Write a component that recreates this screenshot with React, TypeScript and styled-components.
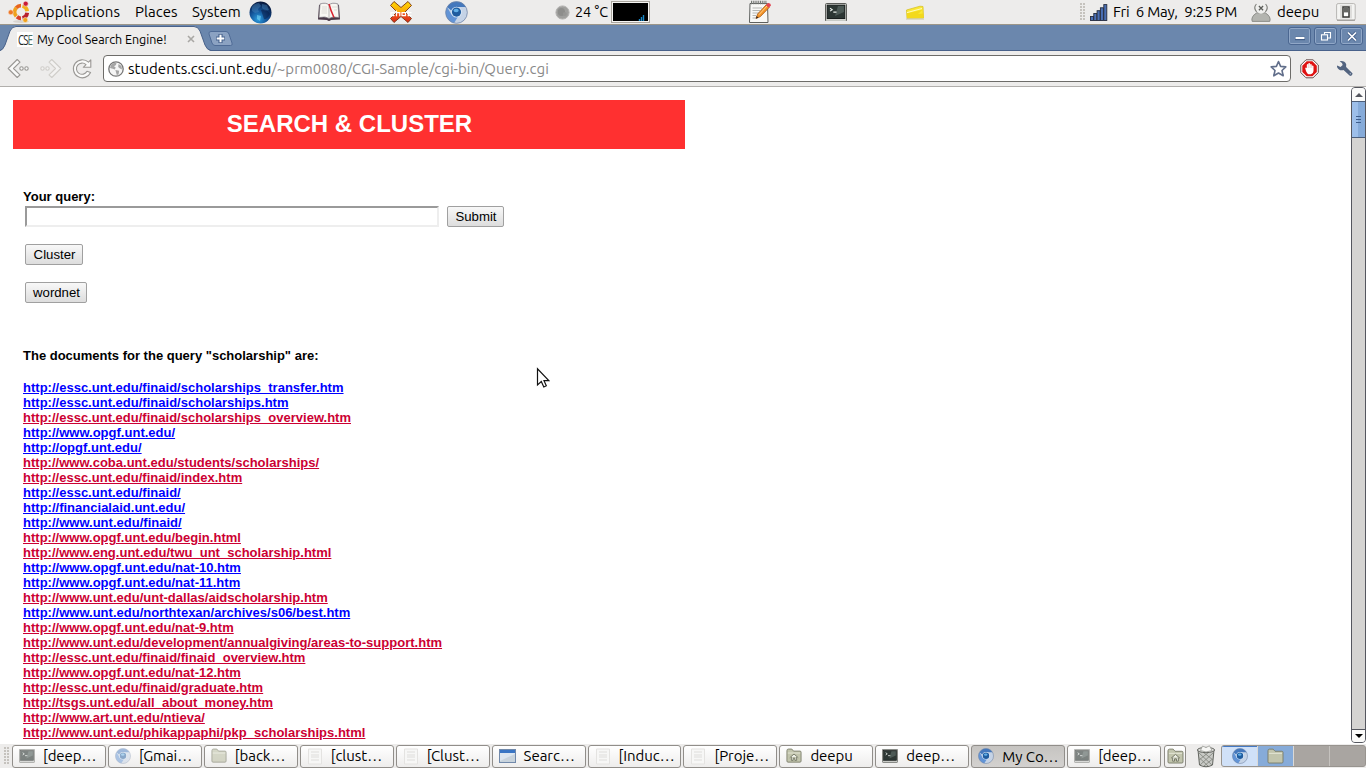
import React from "react";
import styled, { createGlobalStyle } from "styled-components";

const GlobalStyle = createGlobalStyle`
  * { box-sizing: border-box; }
  html, body { margin: 0; padding: 0; overflow: hidden; background: #fff; }
`;

const uiFont = `"Ubuntu", "Noto Sans", "Open Sans", sans-serif`;

const Desktop = styled.div`
  display: flex;
  flex-direction: column;
  width: 1366px;
  height: 768px;
  overflow: hidden;
  background: #fff;
  font-family: ${uiFont};
  color: #000;
`;

/* ---------- top panel ---------- */

const Panel = styled.header`
  display: flex;
  align-items: center;
  flex: none;
  height: 25px;
  background: #edeceb;
  border-bottom: 1px solid #9c9689;
`;

const PanelItem = styled.div<{ $w: number; $ml?: number }>`
  display: flex;
  align-items: center;
  flex: none;
  width: ${(p) => p.$w}px;
  height: 24px;
  margin-left: ${(p) => p.$ml ?? 0}px;
`;

const Label = styled.span<{ $ls?: number; $size?: number }>`
  font-size: ${(p) => p.$size ?? 15}px;
  line-height: 20px;
  letter-spacing: ${(p) => p.$ls ?? 0.05}px;
  white-space: pre;
`;

const Grip = styled.span<{ $h: number }>`
  flex: none;
  width: 5px;
  height: ${(p) => p.$h}px;
  background-image: radial-gradient(circle at 1px 1px, #c4c1bc 0.7px, transparent 0.9px);
  background-size: 3px 3px;
`;

const CpuGraph = styled.div`
  display: flex;
  align-items: flex-end;
  width: 39px;
  height: 22px;
  border: 1px solid #aaa69f;
  background: #000;
  box-shadow: inset 0 0 0 1px #f5f4f2;
  padding: 1px;
  svg { display: block; }
`;

/* ---------- browser chrome ---------- */

const TabStrip = styled.div`
  display: flex;
  flex: none;
  height: 26px;
  background: #6b87ad;
  border-bottom: 1px solid #48618a;
  position: relative;
`;

const Tab = styled.div`
  position: relative;
  flex: none;
  width: 211px;
  height: 26px;
`;

const TabShape = styled.svg`
  position: absolute;
  left: 0;
  top: 0;
`;

const TabContent = styled.div`
  position: relative;
  display: flex;
  align-items: center;
  height: 26px;
  padding-left: 17px;
`;

const Favicon = styled.span`
  display: flex;
  align-items: center;
  justify-content: center;
  width: 16px;
  height: 15px;
  margin-top: 2px;
  background: #fff;
  font: 14px/15px "Open Sans", sans-serif;
  letter-spacing: -1.4px;
  color: #1d2626;
  span { transform: scaleX(0.7); white-space: nowrap; }
  b { font-weight: 400; color: #4c7268; }
`;

const TabTitle = styled.span`
  width: 129px;
  margin-left: 4px;
  margin-top: 1px;
  font-size: 12.5px;
  letter-spacing: -0.04px;
  white-space: nowrap;
`;

const TabClose = styled.svg`
  margin-left: 21px;
  margin-top: 2px;
`;

const NewTab = styled.svg`
  flex: none;
  margin-left: -4px;
  margin-top: 5px;
`;

const WindowButtons = styled.div`
  display: flex;
  gap: 3px;
  margin-left: auto;
  margin-right: 3px;
  padding-top: 2px;
`;

const WindowButton = styled.button`
  display: flex;
  align-items: center;
  justify-content: center;
  width: 23px;
  height: 18px;
  padding: 0;
  border: 1px solid #4b6791;
  border-radius: 3px;
  background: #6b87ad;
  box-shadow: inset 0 0 0 1px #90a7c7;
`;

const Toolbar = styled.div`
  display: flex;
  align-items: center;
  flex: none;
  height: 36px;
  padding-left: 7px;
  background: #edeceb;
  border-bottom: 1px solid #b1afac;
`;

const ToolIcon = styled.svg<{ $ml?: number }>`
  flex: none;
  margin-left: ${(p) => p.$ml ?? 0}px;
`;

const AddressBar = styled.div`
  display: flex;
  align-items: center;
  flex: none;
  width: 1188px;
  height: 27px;
  margin-left: 10px;
  padding: 0 3px 0 4px;
  background: #fff;
  border: 1px solid #6d6c69;
  border-radius: 4px;
`;

const Url = styled.span`
  flex: 1;
  margin-left: 4px;
  margin-top: 0;
  font-size: 15px;
  letter-spacing: 0.02px;
  white-space: nowrap;
  color: #8a8a8a;
  b { font-weight: 400; color: #000; }
`;

/* ---------- page ---------- */

const Viewport = styled.div`
  display: flex;
  flex: none;
  height: 657px;
  overflow: hidden;
`;

const Page = styled.main`
  flex: 1;
  padding: 13px 0 0 13px;
  overflow: hidden;
  font-family: "Liberation Sans", Arial, sans-serif;
  font-size: 13px;
  line-height: 15px;
`;

const Banner = styled.h1`
  width: 672px;
  height: 49px;
  margin: 0;
  padding-left: 1px;
  background: #ff3030;
  color: #fff;
  font-size: 24px;
  line-height: 48px;
  font-weight: 700;
  text-align: center;
`;

const Body = styled.div`
  padding: 40px 0 0 10px;
`;

const Strong = styled.div`
  font-weight: 700;
`;

const QueryForm = styled.div`
  display: flex;
  flex-direction: column;
  align-items: flex-start;
  gap: 17px;
  padding: 2px 0 45px 2px;
`;

const QueryRow = styled.div`
  display: flex;
  gap: 8px;
`;

const QueryInput = styled.input`
  width: 414px;
  height: 21px;
  padding: 1px;
  border: 2px solid;
  border-color: #9a9a9a #eeeeee #eeeeee #9a9a9a;
  background: #fff;
  outline: none;
`;

const FormButton = styled.button<{ $w: number }>`
  width: ${(p) => p.$w}px;
  height: 21px;
  padding: 0 0 0 1px;
  border: 1px solid #a0a0a0;
  border-radius: 2px;
  background: linear-gradient(#f8f8f8, #dddddd);
  font: 13.2px/17px "Liberation Sans", Arial, sans-serif;
  color: #000;
  white-space: nowrap;
`;

const Results = styled.div`
  display: flex;
  flex-direction: column;
  align-items: flex-start;
  margin-top: 17px;
`;

const ResultLink = styled.a<{ $visited?: boolean }>`
  font-weight: 700;
  letter-spacing: 0.01px;
  text-decoration: underline;
  color: ${(p) => (p.$visited ? "#cc0033" : "#0000ff")};
`;

const ScrollBar = styled.div`
  display: flex;
  flex-direction: column;
  flex: none;
  width: 15px;
  height: 656px;
  background: #d5d4d2;
  border: 1px solid #55575f;
  border-radius: 4px;
`;

const ScrollArrow = styled.div<{ $down?: boolean }>`
  display: flex;
  align-items: center;
  justify-content: center;
  height: 13px;
  background: #fbfbfa;
  border-radius: ${(p) => (p.$down ? "0 0 3px 3px" : "3px 3px 0 0")};
  margin-top: ${(p) => (p.$down ? "auto" : "0")};
  border-top: ${(p) => (p.$down ? "1px solid #55575f" : "none")};
`;

const ScrollThumb = styled.div`
  display: flex;
  align-items: center;
  justify-content: center;
  height: 37px;
  border: solid #4c5f7b;
  border-width: 1px 0;
  background: linear-gradient(90deg, #9dbfea 0 50%, #86abd9 50%);
`;

/* ---------- bottom panel ---------- */

const TaskBar = styled.footer`
  display: flex;
  align-items: center;
  flex: none;
  height: 24px;
  padding-left: 4px;
  background: #edeceb;
`;

const TaskList = styled.div`
  display: flex;
  gap: 2px;
  width: 1149px;
  margin-left: 3px;
`;

const Task = styled.button<{ $active?: boolean }>`
  display: flex;
  align-items: center;
  flex: 1;
  min-width: 0;
  height: 23px;
  padding: 0 0 0 6px;
  border: 1px solid #918e8a;
  border-radius: 3px;
  background: ${(p) =>
    p.$active ? "linear-gradient(#c6c4c1, #d3d1cf)" : "linear-gradient(#ffffff, #eeedec)"};
  color: #000;
  font-family: ${uiFont};
  svg { flex: none; }
`;

const TaskLabel = styled.span<{ $active?: boolean }>`
  margin-left: 8px;
  padding-top: ${(p) => (p.$active ? 1 : 0)}px;
  font-size: 15px;
  line-height: 20px;
  letter-spacing: -0.05px;
  white-space: nowrap;
`;

const FolderButton = styled.div`
  display: flex;
  align-items: center;
  justify-content: center;
  width: 22px;
  height: 23px;
  margin-left: 3px;
  border: 1px solid #918e8a;
  border-radius: 3px;
  background: linear-gradient(#ffffff, #eeedec);
`;

const Pager = styled.div`
  display: flex;
  width: 145px;
  height: 22px;
  margin-left: auto;
  border: 1px solid #98948f;
  border-radius: 3px;
  overflow: hidden;
  background: #a9a5a1;
`;

const Workspace = styled.div<{ $tone: "light" | "blue" | "off" }>`
  display: flex;
  align-items: center;
  justify-content: center;
  flex: 1;
  border-right: 1px solid #dbd9d6;
  background: ${(p) => ({ light: "#d0e1f8", blue: "#86abd9", off: "#a9a5a1" })[p.$tone]};
  box-shadow: ${(p) => (p.$tone === "light" ? "inset 0 1px #4479c4" : "none")};
  &:nth-child(3) { border-right-color: #c5c2be; }
  &:last-child { border-right: 0; }
`;

const Cursor = styled.svg`
  position: absolute;
  left: 536px;
  top: 367px;
`;

/* ---------- icons ---------- */

const UbuntuIcon = () => (
  <svg width="24" height="24" viewBox="0 0 24 24" fill="none">
    <ellipse cx="13" cy="21.5" rx="8" ry="1.5" fill="#d8d4d0" />
    <path d="M8.3 16.2 A6.3 6.3 0 0 1 8.3 7.8" stroke="#f0a11d" strokeWidth="3.8" />
    <path d="M8.3 7.8 A6.3 6.3 0 0 1 13 5.7" stroke="#e8641c" strokeWidth="3.8" />
    <path d="M14.5 5.9 A6.3 6.3 0 0 1 19.2 11.2" stroke="#f3b01c" strokeWidth="3.8" />
    <path d="M19.2 12.8 A6.3 6.3 0 0 1 14.5 18.1" stroke="#b8202c" strokeWidth="3.8" />
    <path d="M13 18.3 A6.3 6.3 0 0 1 9 16.8" stroke="#d9402a" strokeWidth="3.8" />
    <circle cx="17.7" cy="3.7" r="2.5" fill="#c91a35" stroke="#f2dede" strokeWidth=".6" />
    <circle cx="2.8" cy="12.3" r="2.5" fill="#ee7727" stroke="#f6e3d4" strokeWidth=".6" />
    <circle cx="17.3" cy="20" r="2.5" fill="#f0a11d" stroke="#f6ebd4" strokeWidth=".6" />
  </svg>
);

const GlobeIcon = () => (
  <svg width="23" height="23" viewBox="0 0 23 23">
    <defs>
      <radialGradient id="sea" cx=".4" cy=".8" r=".8">
        <stop offset="0" stopColor="#2c9fe0" />
        <stop offset=".5" stopColor="#125095" />
        <stop offset="1" stopColor="#071538" />
      </radialGradient>
    </defs>
    <circle cx="11.5" cy="11.5" r="11" fill="url(#sea)" />
    <path d="M3 6 Q6 2 10 2 L12 5 L9 8 L10 11 L6 12 L3 10Z M13 3 L18 4 L20 9 L16 10 L13 7Z" fill="#4d8fc4" opacity=".4" />
    <path d="M8 14 L12 15 L11 20 L8 18Z" fill="#75d2f4" opacity=".6" />
    <path d="M12 9 Q18 7 21 13 Q18 19 15 18 Z" fill="#07173d" opacity=".5" />
  </svg>
);

const BookIcon = () => (
  <svg width="24" height="20" viewBox="0 0 24 20">
    <path d="M2 3 L1 17.5 L10 18 Q12 20 14 18 L23 17.5 L22 3Z" fill="#493947" />
    <path d="M3 2 Q9 0 12 3 Q15 0 21 2 L22 15.5 Q15 14 12 16.5 Q9 14 2 15.5Z" fill="#f8f7f2" stroke="#77737b" strokeWidth=".7" />
    <path d="M12 3 V16" stroke="#b7b4b2" />
    <path d="M5 5 H10 M5 7 H10 M4.5 9 H10 M4.5 11 H10 M15 5 H20 M17 8 H20" stroke="#d4d0cc" strokeWidth=".7" />
    <path d="M12 2 Q13.5 8 17 15.5" stroke="#d8232f" strokeWidth="1.5" fill="none" />
  </svg>
);

const XChatIcon = () => (
  <svg width="24" height="24" viewBox="0 0 24 24">
    <defs>
      <linearGradient id="fire" x1="0" y1="0" x2="0" y2="1">
        <stop offset="0" stopColor="#ffd900" />
        <stop offset=".5" stopColor="#f9a60a" />
        <stop offset=".55" stopColor="#f2581e" />
        <stop offset="1" stopColor="#d92913" />
      </linearGradient>
    </defs>
    <path d="M5 1.5 L12 7.5 L19 1.5 L22.5 5.5 L16 12 L22.5 18.5 L19 22.5 L12 16.5 L5 22.5 L1.5 18.5 L8 12 L1.5 5.5Z" fill="url(#fire)" stroke="#783314" strokeWidth=".9" />
    <path d="M5.5 12.7 H2 V15.6 H5.5 M7.5 10.5 V16.2 M7.5 12.7 H10.8 V16.2 M13 12.7 H16.5 V15.6 H13Z M19.2 10.5 V15.6 H22.5 M18 12.7 H22.5" fill="none" stroke="#fff" strokeWidth="1.2" />
  </svg>
);

const ChromiumIcon = ({ size = 23, faded = false }: { size?: number; faded?: boolean }) => (
  <svg width={size} height={size} viewBox="0 0 24 24" opacity={faded ? 0.5 : 1}>
    <circle cx="12" cy="12" r="11.3" fill="#c5d3e6" />
    <path d="M2.2 6.3 A11.3 11.3 0 0 1 21.8 6.3 H12 L6.5 10Z" fill="#4478bd" />
    <path d="M2.2 6.3 A11.3 11.3 0 0 0 9.5 23 L13.5 16.5 L6.7 14Z" fill="#6294d6" />
    <circle cx="12" cy="12" r="11.3" fill="none" stroke="#6e83a5" strokeWidth=".8" />
    <circle cx="12" cy="11.6" r="5.7" fill="#d9e8f8" />
    <circle cx="12" cy="11.6" r="4.8" fill="#1f5c9f" />
    <ellipse cx="11.6" cy="9.9" rx="2.7" ry="1.8" fill="#62b0e8" />
  </svg>
);

const MoonIcon = () => (
  <svg width="15" height="15" viewBox="0 0 15 15">
    <circle cx="7.5" cy="7.5" r="6.6" fill="#9f9f9d" stroke="#b5b4b2" />
    <ellipse cx="6.4" cy="7" rx="3.6" ry="4" fill="#8d8d8b" />
    <ellipse cx="9.8" cy="9" rx="2" ry="2" fill="#969694" />
  </svg>
);

const NotesIcon = () => (
  <svg width="24" height="24" viewBox="0 0 24 24">
    <path d="M2 3.5 H19.5 L20 22.5 H1.5Z" fill="#f8f8f6" stroke="#5e605e" />
    <path d="M3 2.5 H18.5" stroke="#757975" strokeWidth="3.4" strokeDasharray="1 .8" />
    <path d="M4.5 8 H14 M4.5 10.5 H12 M4.5 13 H11 M4.5 15.5 H8 M4.5 18 H8" stroke="#b5b7b5" />
    <path d="M8 18.5 L9.6 14 L18.4 4.6 L21.3 7.3 L12.4 16.6Z" fill="#f49427" stroke="#a75b16" strokeWidth=".8" />
    <path d="M17.8 5.2 L20 3 Q22.8 2.6 23 5.6 L20.8 7.8Z" fill="#e44451" />
    <path d="M8 18.5 L8.7 16.1 L10.3 17.7Z" fill="#2c211b" />
    <path d="M11 14.7 L19 6" stroke="#ffd08a" />
  </svg>
);

const TerminalIcon = ({ size = 22, faded = false }: { size?: number; faded?: boolean }) => (
  <svg width={size} height={size * 0.86} viewBox="0 0 22 19" opacity={faded ? 0.6 : 1}>
    <rect x=".5" y=".5" width="21" height="18" rx="1" fill="#d5d7d2" stroke="#555753" />
    <rect x="2.2" y="2.2" width="17.6" height="13.4" fill="#2c3633" stroke="#171c1b" />
    <path d="M13 3 H19 V9 L10 13Z" fill="#4c5955" />
    <path d="M5 5.2 L7.2 6.7 L5 8.2 M8.3 9.2 H11.5" fill="none" stroke="#e9efea" strokeWidth="1.1" />
  </svg>
);

const StickyIcon = () => (
  <svg width="20" height="15" viewBox="0 0 20 15">
    <path d="M1.5 5 L15 1.2 L18 1.5 L18.5 13 L2 13.2Z" fill="#fae834" stroke="#d8c128" strokeWidth=".8" />
    <path d="M2 8.2 L17.5 4.8 L13 9 L18.5 8.5 V13 H2Z" fill="#f3d91c" />
    <path d="M2 7.6 L17 3.5" stroke="#fffbbd" />
    <path d="M1 14 H19" stroke="#cbc69d" />
  </svg>
);

const SignalIcon = () => (
  <svg width="18" height="17" viewBox="0 0 18 17" fill="#4a6fb5" stroke="#252c3d" strokeWidth=".9">
    <rect x=".5" y="12.5" width="3" height="4" />
    <rect x="3.8" y="9.5" width="3" height="7" />
    <rect x="7.1" y="6.7" width="3" height="9.8" />
    <rect x="10.4" y="3.8" width="3" height="12.7" />
    <rect x="13.8" y=".6" width="3" height="15.9" />
  </svg>
);

const UserIcon = () => (
  <svg width="20" height="19" viewBox="0 0 20 19">
    <path d="M1.2 18.4 Q-.4 13.6 5.8 9.8 H14.2 Q20.4 13.6 18.8 18.4Z" fill="#b3b4af" stroke="#868782" strokeWidth=".9" />
    <path d="M5.7 1 H14.3 L15.4 5 Q14 10.7 10 10.7 Q6 10.7 4.6 5Z" fill="#efefed" />
    <path d="M5.4 1 Q2 4.8 5.6 8.8 M14.6 1 Q18 4.8 14.4 8.8" fill="none" stroke="#7d7e79" strokeWidth="1.1" />
    <path d="M7.9 3 L12.1 7.2 M12.1 3 L7.9 7.2" stroke="#5d5e5a" strokeWidth="1.3" />
  </svg>
);

const ShutdownIcon = () => (
  <svg width="20" height="18" viewBox="0 0 20 18">
    <rect x=".6" y=".6" width="18.6" height="16.6" rx="1.5" fill="#f4f4f2" stroke="#b7b5b2" />
    <path d="M1 17.2 H19" stroke="#95938f" />
    <rect x="4" y="2" width="12" height="13.5" fill="#dedddb" />
    <rect x="7" y="4" width="6" height="10" fill="#fff" stroke="#383836" strokeWidth="1.5" />
    <rect x="7.6" y="4.4" width="4.8" height="5" fill="#666764" />
  </svg>
);

const BackIcon = () => (
  <ToolIcon width="23" height="22" viewBox="0 0 23 22" fill="#fafaf9" stroke="#9a9895" strokeWidth="1.1">
    <path d="M10.2 1.5 L13 4.2 L6.5 10.5 L13 16.8 L10.2 19.5 L1.2 10.5Z" strokeLinejoin="round" />
    <circle cx="14.5" cy="10.5" r="1.7" />
    <circle cx="19.5" cy="10.5" r="1.7" />
  </ToolIcon>
);

const ForwardIcon = () => (
  <ToolIcon $ml={9} width="23" height="22" viewBox="0 0 23 22" fill="#f3f2f1" stroke="#d0ceca" strokeWidth="1.1">
    <path d="M12.8 1.5 L10 4.2 L16.5 10.5 L10 16.8 L12.8 19.5 L21.8 10.5Z" strokeLinejoin="round" />
    <circle cx="3.5" cy="10.5" r="1.7" />
    <circle cx="8.5" cy="10.5" r="1.7" />
  </ToolIcon>
);

const ReloadIcon = () => (
  <ToolIcon $ml={10} width="21" height="22" viewBox="0 0 21 22">
    <path d="M18.8 1.8 V9.3 H11.3 L14 6.7 A5.6 5.6 0 1 0 15 13.3 L18.6 14.5 A9 9 0 1 1 16.5 4.2Z" fill="#fafaf9" stroke="#9a9895" strokeWidth="1.1" strokeLinejoin="round" />
  </ToolIcon>
);

const SiteIcon = () => (
  <svg width="16" height="16" viewBox="0 0 16 16">
    <circle cx="8" cy="8" r="7.2" fill="#f5f5f5" stroke="#777" strokeWidth="1.3" />
    <path d="M3 3.7 Q5 1.5 8.6 1.8 L8 4 L6 5.2 L7.7 6.5 L6.8 8.5 L4.8 7.8 L2 7Z M10.5 3 L13.5 5 L14 8.4 L12 7.5 L10.2 6Z M7.4 9 L11.2 9.8 L10.5 13.4 L8.8 14Z" fill="#a5a5a5" />
  </svg>
);

const StarIcon = () => (
  <svg width="17" height="18" viewBox="0 0 17 18">
    <path d="M8.5 1.5 L10.6 6.4 L15.8 6.9 L12 10.5 L13.2 15.8 L8.5 13 L3.8 15.8 L5 10.5 L1.2 6.9 L6.4 6.4Z" fill="#fff" stroke="#626f8b" strokeWidth="1.6" strokeLinejoin="round" />
  </svg>
);

const AdblockIcon = () => (
  <ToolIcon $ml={9} width="19" height="20" viewBox="0 0 19 20">
    <path d="M6 .8 H13 L18.3 6 V13.6 L13 18.8 H6 L.8 13.6 V6Z" fill="#fff" stroke="#68514f" />
    <path d="M6.7 2.3 H12.4 L16.8 6.7 V12.9 L12.4 17.3 H6.7 L2.3 12.9 V6.7Z" fill="#df1212" />
    <path d="M5.2 9.3 Q5.8 7.8 6.8 9.2 V5.7 Q7.7 4.4 8.3 5.7 V4.6 Q9.3 3.4 10.1 4.6 V5.4 Q11.3 4.3 11.8 5.9 V7 Q13 6 13.5 7.3 V12 Q13.2 15 10.9 15.3 H8.3 Q6.5 14.5 5.2 9.3Z" fill="#fff" />
    <path d="M8.3 5.5 V9 M10.1 5 V9 M11.8 6.2 V9" stroke="#dda0a0" strokeWidth=".5" />
  </ToolIcon>
);

const WrenchIcon = () => (
  <ToolIcon $ml={17} width="18" height="18" viewBox="0 0 18 18">
    <path d="M3.6 1.2 Q8.5.2 10.2 4.3 L10.1 7.1 L16.6 13.4 Q16.5 15.8 14.1 16 L7.5 10 Q3.2 11.4 1 7 L1.1 5.6 L4.5 7 L6.7 5 L6 3Z" fill="#52637f" />
    <circle cx="14.3" cy="13.8" r=".7" fill="#a8b4c5" />
  </ToolIcon>
);

const FolderIcon = ({ home = false, faded = false, size = 18 }: { home?: boolean; faded?: boolean; size?: number }) => (
  <svg width={size} height={size * 0.94} viewBox="0 0 18 17" opacity={faded ? 0.65 : 1}>
    <path d="M1 3 Q1 1.2 2.7 1.2 H6.5 L8.5 3.5 H15.8 Q17 3.5 17 4.7 V14.8 Q17 16 15.8 16 H2.2 Q1 16 1 14.8Z" fill="#c2c5ad" stroke="#7b7e6b" />
    <path d="M2 5.7 H16" stroke="#e5e7d8" />
    {home && <path d="M4.2 11 L9 6.8 L13.8 11 M6 10.2 V14 H8 V11.5 H10 V14 H12 V10.2" fill="#eef0e7" stroke="#6e715f" />}
  </svg>
);

const DocIcon = () => (
  <svg width="16" height="17" viewBox="0 0 16 17">
    <path d="M1.5 1 H14.5 V16 H1.5Z" fill="#f7f7f6" stroke="#e4e3e1" />
    <path d="M4 4 H12 M4 7 H12 M4 9 H12 M4 12 H12" stroke="#dedddb" />
  </svg>
);

const WindowIcon = () => (
  <svg width="17" height="14" viewBox="0 0 17 14">
    <rect x=".5" y=".5" width="16" height="13" fill="#dce6f0" stroke="#7189aa" />
    <rect x="1" y="1" width="15" height="3" fill="#3975c4" />
    <path d="M1 12 L16 5 V13 H1Z" fill="#c8d3dc" />
  </svg>
);

const TrashIcon = () => (
  <svg width="20" height="23" viewBox="0 0 20 23">
    <path d="M2 5 L3.5 20 Q10 23.5 16.5 20 L18 5Z" fill="#c9cac6" stroke="#62645f" />
    <path d="M3 8 L16 20 M3.5 13 L12 21 M7 7 L17 15 M17 8 L4 20 M13 7 L3 15 M16.5 14 L8 21" stroke="#7e817a" strokeWidth=".8" />
    <ellipse cx="10" cy="5" rx="8.6" ry="2.6" fill="#dededb" stroke="#646661" />
    <path d="M4.5 5.5 L6.5 1 L10 2.5 L13.5 .8 L16 5.5 L10 7Z" fill="#f6f6f4" stroke="#9b9c97" strokeWidth=".8" />
  </svg>
);

/* ---------- data ---------- */

const results: Array<[string, boolean]> = [
  ["http://essc.unt.edu/finaid/scholarships_transfer.htm", false],
  ["http://essc.unt.edu/finaid/scholarships.htm", false],
  ["http://essc.unt.edu/finaid/scholarships_overview.htm", true],
  ["http://www.opgf.unt.edu/", false],
  ["http://opgf.unt.edu/", false],
  ["http://www.coba.unt.edu/students/scholarships/", true],
  ["http://essc.unt.edu/finaid/index.htm", true],
  ["http://essc.unt.edu/finaid/", false],
  ["http://financialaid.unt.edu/", false],
  ["http://www.unt.edu/finaid/", false],
  ["http://www.opgf.unt.edu/begin.html", true],
  ["http://www.eng.unt.edu/twu_unt_scholarship.html", true],
  ["http://www.opgf.unt.edu/nat-10.htm", false],
  ["http://www.opgf.unt.edu/nat-11.htm", false],
  ["http://www.unt.edu/unt-dallas/aidscholarship.htm", true],
  ["http://www.unt.edu/northtexan/archives/s06/best.htm", false],
  ["http://www.opgf.unt.edu/nat-9.htm", true],
  ["http://www.unt.edu/development/annualgiving/areas-to-support.htm", true],
  ["http://essc.unt.edu/finaid/finaid_overview.htm", true],
  ["http://www.opgf.unt.edu/nat-12.htm", true],
  ["http://essc.unt.edu/finaid/graduate.htm", true],
  ["http://tsgs.unt.edu/all_about_money.htm", true],
  ["http://www.art.unt.edu/ntieva/", true],
  ["http://www.unt.edu/phikappaphi/pkp_scholarships.html", true],
];

const tasks: Array<{ label: string; icon: React.ReactNode; active?: boolean }> = [
  { label: "[deep…", icon: <TerminalIcon size={16} faded /> },
  { label: "[Gmai…", icon: <ChromiumIcon size={16} faded /> },
  { label: "[back…", icon: <FolderIcon size={16} faded /> },
  { label: "[clust…", icon: <DocIcon /> },
  { label: "[Clust…", icon: <DocIcon /> },
  { label: "Searc…", icon: <WindowIcon /> },
  { label: "[Induc…", icon: <DocIcon /> },
  { label: "[Proje…", icon: <DocIcon /> },
  { label: "deepu", icon: <FolderIcon size={16} home /> },
  { label: "deep…", icon: <TerminalIcon size={16} /> },
  { label: "My Co…", icon: <ChromiumIcon size={16} />, active: true },
  { label: "[deep…", icon: <TerminalIcon size={16} faded /> },
];

export default function App() {
  return (
    <Desktop>
      <GlobalStyle />
      <Panel>
        <PanelItem $w={24} $ml={8}><UbuntuIcon /></PanelItem>
        <PanelItem $w={86} $ml={4}><Label $ls={0.1}>Applications</Label></PanelItem>
        <PanelItem $w={44} $ml={13}><Label>Places</Label></PanelItem>
        <PanelItem $w={50} $ml={13}><Label>System</Label></PanelItem>
        <PanelItem $w={23} $ml={7}><GlobeIcon /></PanelItem>
        <PanelItem $w={24} $ml={45}><BookIcon /></PanelItem>
        <PanelItem $w={24} $ml={48}><XChatIcon /></PanelItem>
        <PanelItem $w={23} $ml={32}><ChromiumIcon /></PanelItem>
        <PanelItem $w={15} $ml={87}><MoonIcon /></PanelItem>
        <PanelItem $w={34} $ml={5}><Label $size={14.4} $ls={0}>24 °C</Label></PanelItem>
        <PanelItem $w={39} $ml={2}>
          <CpuGraph>
            <svg width="35" height="18" viewBox="0 0 35 18">
              <path d="M26.5 18 V16 M28.5 18 V14 M30.5 18 V12" stroke="#1685c4" strokeWidth="1.4" />
            </svg>
          </CpuGraph>
        </PanelItem>
        <PanelItem $w={24} $ml={98}><NotesIcon /></PanelItem>
        <PanelItem $w={22} $ml={53}><TerminalIcon /></PanelItem>
        <PanelItem $w={20} $ml={58}><StickyIcon /></PanelItem>
        <PanelItem $w={5} $ml={155}><Grip $h={18} /></PanelItem>
        <PanelItem $w={18} $ml={5}><SignalIcon /></PanelItem>
        <PanelItem $w={128} $ml={5}><Label $ls={-0.22}>{"Fri  6 May,  9:25 PM"}</Label></PanelItem>
        <PanelItem $w={20} $ml={10}><UserIcon /></PanelItem>
        <PanelItem $w={44} $ml={6}><Label $ls={-0.1}>deepu</Label></PanelItem>
        <PanelItem $w={20} $ml={15}><ShutdownIcon /></PanelItem>
      </Panel>

      <TabStrip>
        <Tab>
          <TabShape width="211" height="26" viewBox="0 0 211 26">
            <path d="M0 26 Q3 25 5 20 L10 6 Q12 1.5 16 1.5 H194 Q198 1.5 200 6 L205 20 Q207 25 211 26Z" fill="#edeceb" />
            <path d="M0 25.5 Q3 25 5 20 L10 6 Q12 1.5 16 1.5 H194 Q198 1.5 200 6 L205 20 Q207 25 211 25.5" fill="none" stroke="#48618a" />
          </TabShape>
          <TabContent>
            <Favicon><span>CS<b>E</b></span></Favicon>
            <TabTitle>My Cool Search Engine!</TabTitle>
            <TabClose width="8" height="8" viewBox="0 0 8 8">
              <path d="M1 1 L7 7 M7 1 L1 7" stroke="#a9a7a4" strokeWidth="1.6" />
            </TabClose>
          </TabContent>
        </Tab>
        <NewTab width="27" height="18" viewBox="0 0 27 18">
          <path d="M4 1.5 H19 Q21 1.5 22 4 L25 13 Q26 15.5 23.5 15.5 H8 Q6 15.5 5 13 L2 4 Q1.5 1.5 4 1.5Z" fill="#8ba2c2" stroke="#4f6b96" />
          <path d="M13.5 4 V13 M9 8.5 H18" stroke="#48648f" strokeWidth="4.2" />
          <path d="M13.5 4.7 V12.3 M9.7 8.5 H17.3" stroke="#fff" strokeWidth="2" />
        </NewTab>
        <WindowButtons>
          <WindowButton aria-label="Minimise">
            <svg width="12" height="10" viewBox="0 0 12 10"><path d="M1 7.5 H11" stroke="#445f89" strokeWidth="3.4" /><path d="M1.5 7 H10.5" stroke="#fff" strokeWidth="2" /></svg>
          </WindowButton>
          <WindowButton aria-label="Restore">
            <svg width="12" height="11" viewBox="0 0 12 11" fill="none" stroke="#fff" strokeWidth="1.1"><path d="M4.5 3.5 V1.5 H10.5 V7 H8" /><rect x="1.5" y="3.8" width="6" height="5.2" /></svg>
          </WindowButton>
          <WindowButton aria-label="Close">
            <svg width="12" height="11" viewBox="0 0 12 11"><path d="M2 1.5 L10 9.5 M10 1.5 L2 9.5" stroke="#48638d" strokeWidth="3.2" /><path d="M2 1.5 L10 9.5 M10 1.5 L2 9.5" stroke="#fff" strokeWidth="1.6" /></svg>
          </WindowButton>
        </WindowButtons>
      </TabStrip>

      <Toolbar>
        <BackIcon />
        <ForwardIcon />
        <ReloadIcon />
        <AddressBar>
          <SiteIcon />
          <Url><b>students.csci.unt.edu</b>/~prm0080/CGI-Sample/cgi-bin/Query.cgi</Url>
          <StarIcon />
        </AddressBar>
        <AdblockIcon />
        <WrenchIcon />
      </Toolbar>

      <Viewport>
        <Page>
          <Banner>SEARCH &amp; CLUSTER</Banner>
          <Body>
            <Strong>Your query:</Strong>
            <QueryForm>
              <QueryRow>
                <QueryInput aria-label="Your query" />
                <FormButton $w={57}>Submit</FormButton>
              </QueryRow>
              <FormButton $w={58}>Cluster</FormButton>
              <FormButton $w={62}>wordnet</FormButton>
            </QueryForm>
            <Strong>The documents for the query "scholarship" are:</Strong>
            <Results>
              {results.map(([url, visited]) => (
                <ResultLink key={url} $visited={visited}>{url}</ResultLink>
              ))}
            </Results>
          </Body>
        </Page>
        <ScrollBar>
          <ScrollArrow>
            <svg width="8" height="5" viewBox="0 0 8 5"><path d="M0 5 L4 1 L8 5Z" fill="#55575f" /></svg>
          </ScrollArrow>
          <ScrollThumb>
            <svg width="5" height="8" viewBox="0 0 5 8"><path d="M0 .5 H5 M0 3.5 H5 M0 6.5 H5" stroke="#3f5f8e" /></svg>
          </ScrollThumb>
          <ScrollArrow $down>
            <svg width="8" height="5" viewBox="0 0 8 5"><path d="M0 0 L4 4 L8 0Z" fill="#000" /></svg>
          </ScrollArrow>
        </ScrollBar>
      </Viewport>

      <TaskBar>
        <Grip $h={18} />
        <TaskList>
          {tasks.map((t, i) => (
            <Task key={i} $active={t.active}>
              {t.icon}
              <TaskLabel $active={t.active}>{t.label}</TaskLabel>
            </Task>
          ))}
        </TaskList>
        <FolderButton><FolderIcon home size={17} /></FolderButton>
        <PanelItem $w={20} $ml={10}><TrashIcon /></PanelItem>
        <Pager>
          <Workspace $tone="light"><ChromiumIcon size={16} /></Workspace>
          <Workspace $tone="blue"><FolderIcon size={17} /></Workspace>
          <Workspace $tone="off" />
          <Workspace $tone="off" />
        </Pager>
      </TaskBar>

      <Cursor width="14" height="22" viewBox="0 0 14 22">
        <path d="M1.5 1.8 V18 L5.3 14.6 L7.8 20 L10.3 18.8 L8 13.7 H12.8Z" fill="#fff" stroke="#111" strokeWidth="1.2" />
      </Cursor>
    </Desktop>
  );
}
